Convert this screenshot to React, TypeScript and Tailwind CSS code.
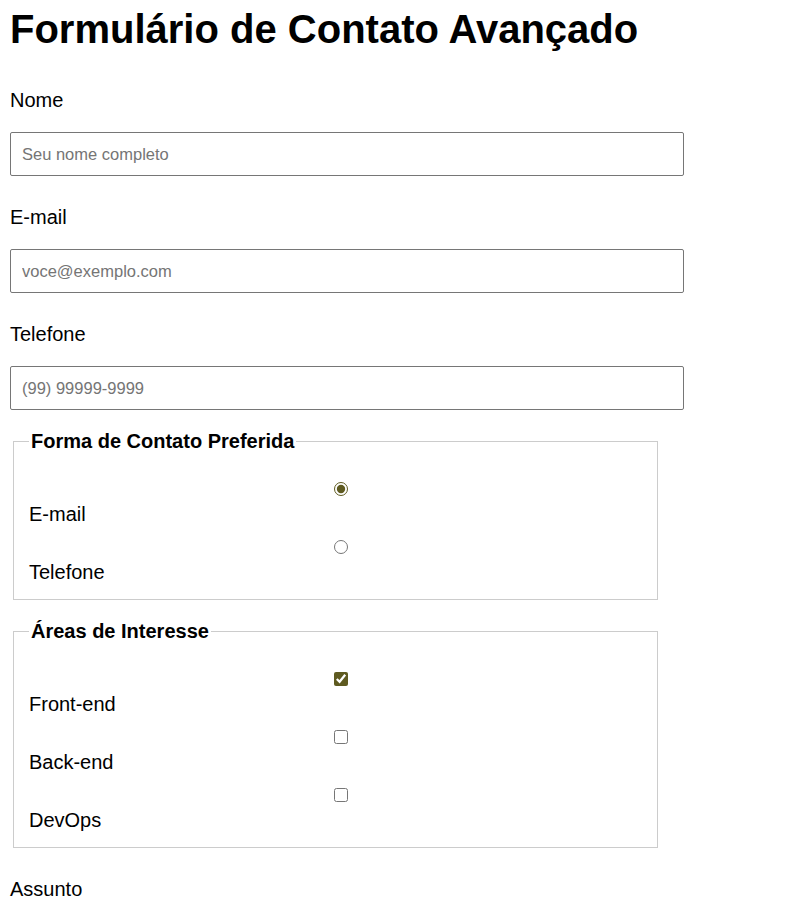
import { useState } from 'react';

interface Field {
  id: string;
  label: string;
  type: string;
  placeholder: string;
}

const fields: Field[] = [
  { id: 'nome', label: 'Nome', type: 'text', placeholder: 'Seu nome completo' },
  { id: 'email', label: 'E-mail', type: 'email', placeholder: 'voce@exemplo.com' },
  { id: 'telefone', label: 'Telefone', type: 'tel', placeholder: '(99) 99999-9999' },
];

const contactOptions = ['E-mail', 'Telefone'];
const interestOptions = ['Front-end', 'Back-end', 'DevOps'];

export default function App() {
  const [contact, setContact] = useState('E-mail');
  const [interests, setInterests] = useState<string[]>(['Front-end']);

  const toggleInterest = (name: string) => {
    setInterests((prev) => (prev.includes(name) ? prev.filter((i) => i !== name) : [...prev, name]));
  };

  return (
    <div className="min-h-screen bg-white px-[10px] pt-[6px] pb-8 text-black font-['Liberation_Sans',Arial,sans-serif]">
      <h1 className="text-[40px] font-bold leading-[46px]">Formulário de Contato Avançado</h1>

      <form onSubmit={(e) => e.preventDefault()}>
        {/* campos de texto */}
        {fields.map((f, i) => (
          <div key={f.id} className={i === 0 ? 'mt-[36px]' : 'mt-[29px]'}>
            <label htmlFor={f.id} className="block pt-[1px] text-[20px] leading-[23px]">
              {f.label}
            </label>
            <input
              id={f.id}
              type={f.type}
              placeholder={f.placeholder}
              className="mt-[20px] block h-[44px] w-[674px] rounded-[2px] border border-[#767676] px-[11px] text-[16.5px] placeholder:text-[#757575] outline-none"
            />
          </div>
        ))}

        {/* forma de contato */}
        <fieldset className="mt-[20px] ml-[3px] w-[645px] border border-[#cccccc] px-[15px] pt-[15px] pb-[15px]">
          <legend className="px-[2px] text-[20px] font-bold leading-[23px]">Forma de Contato Preferida</legend>
          {contactOptions.map((opt) => (
            <div key={opt} className="pt-[14px] first:pt-0">
              <div className="flex justify-center pl-[10px]">
                <input
                  id={`contato-${opt}`}
                  type="radio"
                  name="contato"
                  checked={contact === opt}
                  onChange={() => setContact(opt)}
                  className="m-0 h-[14px] w-[14px] accent-[#5e5a20]"
                />
              </div>
              <label htmlFor={`contato-${opt}`} className="mt-[7px] block text-[20px] leading-[23px]">
                {opt}
              </label>
            </div>
          ))}
        </fieldset>

        {/* áreas de interesse */}
        <fieldset className="mt-[20px] ml-[3px] w-[645px] border border-[#cccccc] px-[15px] pt-[15px] pb-[15px]">
          <legend className="px-[2px] text-[20px] font-bold leading-[23px]">Áreas de Interesse</legend>
          {interestOptions.map((opt) => (
            <div key={opt} className="pt-[14px] first:pt-0">
              <div className="flex justify-center pl-[10px]">
                <input
                  id={`area-${opt}`}
                  type="checkbox"
                  checked={interests.includes(opt)}
                  onChange={() => toggleInterest(opt)}
                  className="m-0 h-[14px] w-[14px] accent-[#5e5a20]"
                />
              </div>
              <label htmlFor={`area-${opt}`} className="mt-[7px] block text-[20px] leading-[23px]">
                {opt}
              </label>
            </div>
          ))}
        </fieldset>

        {/* assunto */}
        <div className="mt-[29px]">
          <label htmlFor="assunto" className="block pt-[1px] text-[20px] leading-[23px]">
            Assunto
          </label>
          <select
            id="assunto"
            className="mt-[20px] block h-[44px] w-[674px] rounded-[2px] border border-[#767676] px-[10px] text-[16.5px]"
          >
            <option>Selecione um assunto</option>
            <option>Dúvida</option>
            <option>Sugestão</option>
            <option>Reclamação</option>
          </select>
        </div>

        <div className="mt-[29px]">
          <label htmlFor="mensagem" className="block pt-[1px] text-[20px] leading-[23px]">
            Mensagem
          </label>
          <textarea
            id="mensagem"
            rows={5}
            placeholder="Escreva sua mensagem"
            className="mt-[20px] block w-[674px] rounded-[2px] border border-[#767676] p-[10px] text-[16.5px]"
          />
        </div>

        <button type="submit" className="mt-[20px] rounded-[2px] border border-[#767676] bg-[#efefef] px-4 py-2 text-[16.5px]">
          Enviar
        </button>
      </form>
    </div>
  );
}
